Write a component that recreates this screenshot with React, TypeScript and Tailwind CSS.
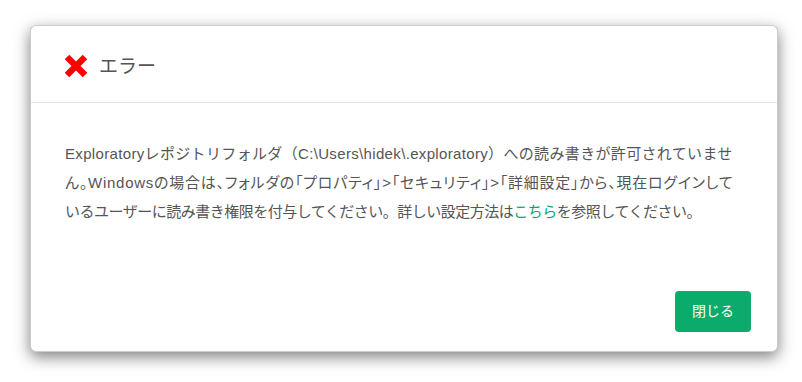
import React from 'react';

const CrossIcon = () => (
  <svg width="24" height="24" viewBox="0 0 24 24" className="shrink-0">
    <path d="M3 3 L21 21 M21 3 L3 21" stroke="#ff0000" strokeWidth="6.4" strokeLinecap="butt" fill="none" />
  </svg>
);

const ErrorDialog = () => {
  return (
    <div className="w-[748px] bg-white rounded-[6px] border border-black/20 shadow-[0_5px_15px_rgba(0,0,0,0.5)]">
      {/* header */}
      <div className="flex items-center gap-[11px] h-[77px] pl-[33px] pt-[4px] border-b border-[#e5e5e5]">
        <CrossIcon />
        <h4 className="text-[19px] text-[#555] leading-none">エラー</h4>
      </div>

      {/* body */}
      <div className="px-[34px] pt-[36px] pb-[30px]">
        <p className="text-[15px] leading-[29px] text-[#555] whitespace-nowrap">
          <span className="block tracking-[0.34px]">
            Exploratoryレポジトリフォルダ（C:\Users\hidek\.exploratory）への読み書きが許可されていませ
          </span>
          <span className="block tracking-[0.75px] [font-feature-settings:'palt']">
            ん。Windowsの場合は、フォルダの「プロパティ」&gt;「セキュリティ」&gt;「詳細設定」から、現在ログインして
          </span>
          <span className="block tracking-[-0.5px]">
            いるユーザーに読み書き権限を付与してください。詳しい設定方法は
            <a href="#" className="text-[#0aa56b]">こちら</a>
            を参照してください。
          </span>
        </p>
      </div>

      {/* footer */}
      <div className="flex justify-end px-[26px] pt-[35px] pb-[19px]">
        <button className="h-[41px] px-[17px] rounded-[4px] bg-[#0aab6b] text-white text-[14px]">閉じる</button>
      </div>
    </div>
  );
};

export default function App() {
  return (
    <div
      className="w-[802px] h-[382px] bg-white pt-[25px] pl-[30px]"
      style={{ fontFamily: '"Liberation Sans", "Noto Sans CJK JP", sans-serif' }}
    >
      <ErrorDialog />
    </div>
  );
}
